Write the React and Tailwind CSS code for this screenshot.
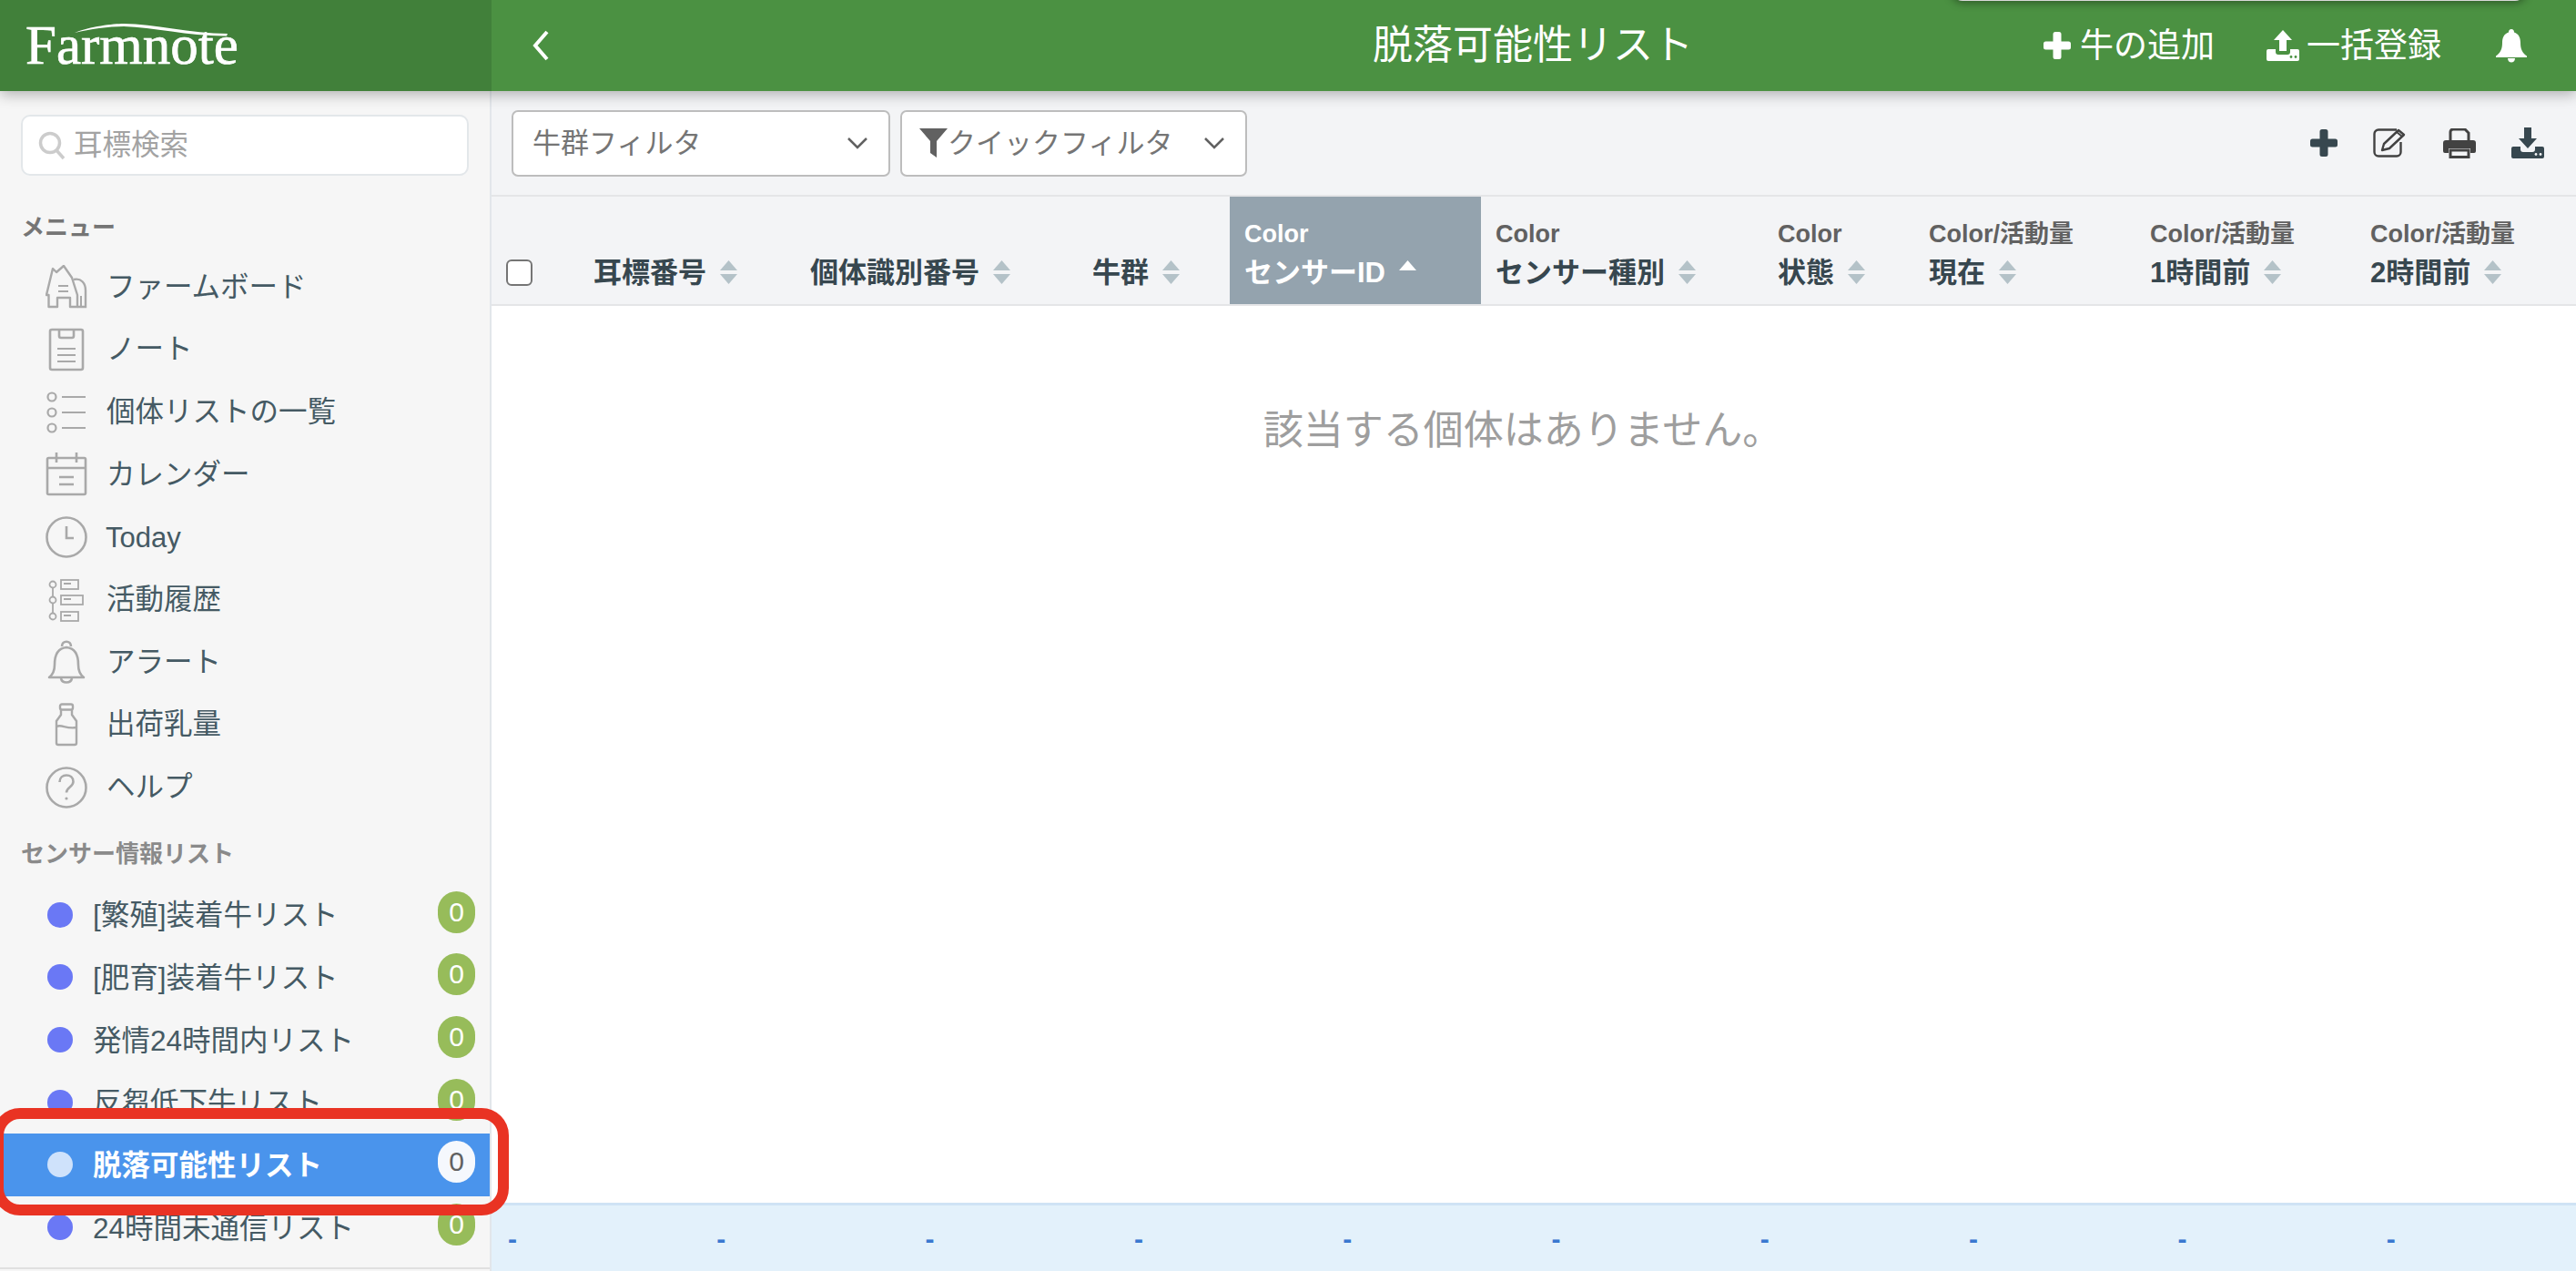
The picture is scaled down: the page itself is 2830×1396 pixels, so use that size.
import React from 'react';

const iconGray = '#a9a9a9';

const FarmIcon = () => (
  <svg width="46" height="48" viewBox="0 0 46 48" fill="none" stroke={iconGray} strokeWidth="2.4">
    <path d="M8 4L1 33h2.500v13H13V36h14v10h8V33L29 14 20 1l-8 7z" strokeLinejoin="round" />
    <path d="M14 23h11M14 29h11" strokeWidth="2" />
    <path d="M31 16c8-2 13 4 13 12v18h-9" />
    <path d="M39 34v12" strokeWidth="2" />
  </svg>
);

const NoteIcon = () => (
  <svg width="40" height="48" viewBox="0 0 40 48" fill="none" stroke={iconGray} strokeWidth="2.6">
    <rect x="2" y="2" width="36" height="44" rx="2" />
    <path d="M12 2v7a2 2 0 0 0 2 2h12a2 2 0 0 0 2-2V2" />
    <path d="M10 23h20M10 30h20M10 37h20" strokeWidth="2.2" />
  </svg>
);

const ListIcon = () => (
  <svg width="44" height="46" viewBox="0 0 44 46" fill="none" stroke={iconGray} strokeWidth="2.2">
    <circle cx="6" cy="6" r="4.5" />
    <circle cx="6" cy="23" r="4.5" />
    <circle cx="6" cy="40" r="4.5" />
    <path d="M17 6h26M17 23h26M17 40h26" />
  </svg>
);

const CalendarIcon = () => (
  <svg width="46" height="48" viewBox="0 0 46 48" fill="none" stroke={iconGray} strokeWidth="2.6">
    <rect x="2" y="6" width="42" height="40" rx="1.5" />
    <path d="M2 17h42M12 0v11M34 0v11" />
    <path d="M15 27h16M15 35h16" strokeWidth="2.4" />
  </svg>
);

const ClockIcon = () => (
  <svg width="46" height="46" viewBox="0 0 46 46" fill="none" stroke={iconGray} strokeWidth="2.6">
    <circle cx="23" cy="23" r="21.5" />
    <path d="M23 11v13h8" />
  </svg>
);

const HistoryIcon = () => (
  <svg width="40" height="48" viewBox="0 0 40 48" fill="none" stroke={iconGray} strokeWidth="1.8">
    <circle cx="5" cy="7" r="3.5" />
    <circle cx="5" cy="24" r="3.5" />
    <circle cx="5" cy="42" r="3.5" />
    <path d="M5 10.5v10M5 27.5v11" />
    <rect x="14" y="2" width="19" height="10" />
    <rect x="14" y="19" width="24" height="10" />
    <rect x="14" y="37" width="19" height="10" />
    <path d="M17 6h8M17 23h8M17 41h8" />
  </svg>
);

const BellOutline = () => (
  <svg width="42" height="48" viewBox="0 0 42 48" fill="none" stroke={iconGray} strokeWidth="2.6">
    <path d="M2 41c4-3 6-7 6-14 0-10 3-18 13-19 10 1 13 9 13 19 0 7 2 11 6 14H2z" strokeLinejoin="round" />
    <path d="M16 7c0-7 10-7 10 0M15 42c1 6 11 6 12 0" />
  </svg>
);

const BottleIcon = () => (
  <svg width="26" height="48" viewBox="0 0 26 48" fill="none" stroke={iconGray} strokeWidth="2.4">
    <rect x="6" y="1.5" width="14" height="6" rx="2" />
    <path d="M7 8v5l-5 7v24a2 2 0 0 0 2 2h18a2 2 0 0 0 2-2V20l-5-7V8" />
    <path d="M2 26c6-3 10 3 22 1" />
  </svg>
);

const HelpIcon = () => (
  <svg width="46" height="46" viewBox="0 0 46 46" fill="none" stroke={iconGray} strokeWidth="2.6">
    <circle cx="23" cy="23" r="21.5" />
    <path d="M15.5 17c0-5 3.500-7.500 7.500-7.500s7.500 2.500 7.500 7c0 6-7.500 6-7.500 12" />
    <circle cx="23" cy="35" r="1.6" fill={iconGray} stroke="none" />
  </svg>
);

const SortIcon = ({ active }) => (
  <svg width="19" height="26" viewBox="0 0 19 26" className="shrink-0">
    <path d="M9.500 0L19 11H0z" fill={active ? '#ffffff' : '#b4c2c8'} />
    {!active && <path d="M0 15h19L9.500 26z" fill="#b4c2c8" />}
  </svg>
);

const PlusIcon = ({ color }) => (
  <svg width="30" height="30" viewBox="0 0 30 30">
    <path d="M10.500 2.500a2.500 2.500 0 0 1 2.500-2.500h4a2.500 2.500 0 0 1 2.500 2.500v8h8a2.500 2.500 0 0 1 2.500 2.500v4a2.500 2.500 0 0 1-2.500 2.500h-8v8a2.500 2.500 0 0 1-2.500 2.500h-4a2.500 2.500 0 0 1-2.500-2.500v-8h-8A2.500 2.500 0 0 1 0 17v-4a2.500 2.500 0 0 1 2.500-2.500h8z" fill={color} />
  </svg>
);

const TrayArrow = ({ color, down, hole }) => (
  <svg width="36" height="34" viewBox="0 0 36 34">
    <path d={down ? 'M14 0h8v12h6L18 23 8 12h6z' : 'M18 0l10 11h-6v12h-8V11H8z'} fill={color} />
    <path d="M2 21h8v3a3 3 0 0 0 3 3h10a3 3 0 0 0 3-3v-3h8a2 2 0 0 1 2 2v9a2 2 0 0 1-2 2H2a2 2 0 0 1-2-2v-9a2 2 0 0 1 2-2z" fill={color} />
    <circle cx="27" cy="29.500" r="1.400" fill={hole} />
    <circle cx="32" cy="29.500" r="1.400" fill={hole} />
  </svg>
);

const EditIcon = () => (
  <svg width="38" height="32" viewBox="0 0 38 32" fill="none" stroke="#424242">
    <path d="M26 1.500H6a4.500 4.500 0 0 0-4.500 4.500v20A4.500 4.500 0 0 0 6 30.500h20a4.500 4.500 0 0 0 4.500-4.500V15" strokeWidth="2.400" />
    <path d="M10 24l2-7L28 2l6 5-16 15z" strokeWidth="2.400" strokeLinejoin="round" />
    <path d="M26 4l6 5" strokeWidth="2" />
  </svg>
);

const PrintIcon = () => (
  <svg width="36" height="33" viewBox="0 0 36 33">
    <path d="M8 14V4a3 3 0 0 1 3-3h13l4 4v9" fill="none" stroke="#424242" strokeWidth="3" />
    <path d="M3 13h30a3 3 0 0 1 3 3v9a2 2 0 0 1-2 2h-4v-5H6v5H2a2 2 0 0 1-2-2v-9a3 3 0 0 1 3-3z" fill="#424242" />
    <rect x="8" y="24" width="20" height="7.500" fill="none" stroke="#424242" strokeWidth="3" />
  </svg>
);

const menuItems = [
  { label: 'ファームボード', icon: <FarmIcon /> },
  { label: 'ノート', icon: <NoteIcon /> },
  { label: '個体リストの一覧', icon: <ListIcon /> },
  { label: 'カレンダー', icon: <CalendarIcon /> },
  { label: 'Today', icon: <ClockIcon />, latin: true },
  { label: '活動履歴', icon: <HistoryIcon /> },
  { label: 'アラート', icon: <BellOutline /> },
  { label: '出荷乳量', icon: <BottleIcon /> },
  { label: 'ヘルプ', icon: <HelpIcon /> },
];

const sensorLists = [
  { label: '[繁殖]装着牛リスト' },
  { label: '[肥育]装着牛リスト' },
  { label: '発情24時間内リスト' },
  { label: '反芻低下牛リスト' },
  { label: '脱落可能性リスト', active: true },
  { label: '24時間未通信リスト' },
];

const columns = [
  { width: 'w-[238px]', name: '耳標番号' },
  { width: 'w-[310px]', name: '個体識別番号' },
  { width: 'w-[167px]', name: '牛群' },
  { width: 'w-[276px]', top: 'Color', name: 'センサーID', active: true },
  { width: 'w-[310px]', top: 'Color', name: 'センサー種別' },
  { width: 'w-[166px]', top: 'Color', name: '状態' },
  { width: 'w-[243px]', top: 'Color/活動量', name: '現在' },
  { width: 'w-[242px]', top: 'Color/活動量', name: '1時間前' },
  { width: 'w-[242px]', top: 'Color/活動量', name: '2時間前' },
];

const Sidebar = () => (
  <aside className="w-[540px] shrink-0 flex flex-col bg-[#f6f6f6] border-r-2 border-[#e2e6ea] overflow-hidden">
    <div className="pt-[26px] pl-[23px] pr-[23px]">
      <div className="h-[67px] flex items-center rounded-[10px] border-2 border-[#e3e7ea] bg-white pl-[17px]">
        <svg width="30" height="32" viewBox="0 0 30 32" fill="none" stroke="#cccccc" strokeWidth="3.500">
          <circle cx="13" cy="13" r="10.500" />
          <path d="M20 21l8 9" />
        </svg>
        <span className="ml-[9px] text-[31.5px] leading-none text-[#a3a3a3]">耳標検索</span>
      </div>
    </div>

    <div className="mt-[42px] mb-[16px] pl-[23px] h-[30px] flex items-center text-[26px] font-bold text-[#757575]">メニュー</div>
    {menuItems.map((item) => (
      <div key={item.label} className="h-[68.7px] shrink-0 flex items-center pl-[50px]">
        <div className="w-[46px] flex justify-center">{item.icon}</div>
        <span className={`leading-none text-[#455a64] ${item.latin ? 'ml-[20px] text-[31px]' : 'ml-[21px] text-[31.5px]'}`}>{item.label}</span>
      </div>
    ))}

    <div className="mt-[24px] mb-[17px] pl-[23px] h-[30px] flex items-center text-[26px] font-bold text-[#8a8a8a]">センサー情報リスト</div>
    {sensorLists.map((item) => (
      <div
        key={item.label}
        className={`h-[68.7px] shrink-0 flex items-center pl-[52px] pr-[16px] ${item.active ? 'bg-[#4a94ec]' : ''}`}
      >
        <span className={`w-[28px] h-[28px] rounded-full shrink-0 ${item.active ? 'bg-[#cfe2fb]' : 'bg-[#6a78f5]'}`} />
        <span className={`ml-[22px] mt-[3px] text-[31.5px] leading-none ${item.active ? 'font-bold text-white' : 'text-[#455a64]'}`}>{item.label}</span>
        <span
          className={`ml-auto mb-[6px] w-[41px] h-[46px] rounded-full flex items-center justify-center text-[30px] leading-none ${
            item.active ? 'bg-[#f5f8fd] text-[#616161]' : 'bg-[#97bc5a] text-white'
          }`}
        >
          0
        </span>
      </div>
    ))}
    <div className="mt-[10px] border-t-2 border-[#e0e0e0]" />
  </aside>
);

const Header = () => (
  <header className="relative z-10 h-[100px] shrink-0 flex text-white shadow-[0_4px_14px_rgba(0,0,0,0.28)]">
    <div className="w-[540px] shrink-0 bg-[#41803a] flex items-center pl-[28px]">
      <div className="relative font-['Liberation_Serif',serif] text-[61px] leading-none text-white pb-[2px] [-webkit-text-stroke:0.7px_white]">
        Farmnote
        <svg className="absolute left-[51px] top-[5px]" width="180" height="20" viewBox="0 0 180 20">
          <path d="M3 12C20 5 45 2 57 2c33 0 73 11 114 11l-1 2.500C130 16 90 6 57 5 40 5 20 8 3 12z" fill="#ffffff" />
        </svg>
      </div>
    </div>
    <div className="relative flex-1 bg-[#4b9142] flex items-center">
      <svg className="ml-[44px]" width="20" height="34" viewBox="0 0 20 34" fill="none" stroke="#ffffff" strokeWidth="4">
        <path d="M17 2L4 17l13 15" />
      </svg>
      <h1 className="absolute left-[968px] text-[44px] leading-none font-normal whitespace-nowrap">脱落可能性リスト</h1>
      <div className="ml-auto flex items-center pr-[54px]">
        <PlusIcon color="#ffffff" />
        <span className="ml-[10px] text-[37px] leading-none">牛の追加</span>
        <span className="ml-[57px]"><TrayArrow color="#ffffff" hole="#4b9142" /></span>
        <span className="ml-[8px] text-[37px] leading-none">一括登録</span>
        <svg className="ml-[60px]" width="34" height="37" viewBox="0 0 34 37">
          <path d="M17 0c2 0 3 1.500 3 3.500 5 1.500 7 6 7 11.500 0 7 2 11 7 14.500V31H0v-1.500C5 26 7 22 7 15 7 9.500 9 5 14 3.500 14 1.500 15 0 17 0z" fill="#ffffff" />
          <path d="M13 32h8c0 6-8 6-8 0z" fill="#ffffff" />
        </svg>
      </div>
      {/* popover peeking from above the window */}
      <div className="absolute left-[1604px] top-[-20px] w-[631px] h-[21px] rounded-b-[12px] bg-[#d9d9d9] shadow-[0_2px_10px_rgba(0,0,0,0.4)]" />
    </div>
  </header>
);

const Toolbar = () => (
  <div className="h-[114px] shrink-0 bg-[#f3f4f6] flex items-center pl-[22px] pr-[35px]">
    <div className="w-[416px] h-[73px] rounded-[7px] border-2 border-[#bdbdbd] bg-white flex items-center pl-[21px] pr-[22px]">
      <span className="text-[31px] leading-none text-[#757575]">牛群フィルタ</span>
      <svg className="ml-auto" width="24" height="14" viewBox="0 0 24 14" fill="none" stroke="#616161" strokeWidth="2.500">
        <path d="M2 2l10 10L22 2" />
      </svg>
    </div>
    <div className="ml-[11px] w-[381px] h-[73px] rounded-[7px] border-2 border-[#bdbdbd] bg-white flex items-center pl-[19px] pr-[22px]">
      <svg width="31" height="32" viewBox="0 0 31 32">
        <path d="M0 0h31L19 14v18l-7-5V14z" fill="#616161" />
      </svg>
      <span className="text-[31px] leading-none text-[#757575] whitespace-nowrap">クイックフィルタ</span>
      <svg className="ml-auto" width="24" height="14" viewBox="0 0 24 14" fill="none" stroke="#616161" strokeWidth="2.500">
        <path d="M2 2l10 10L22 2" />
      </svg>
    </div>
    <div className="ml-auto flex items-center gap-[39px]">
      <PlusIcon color="#37474f" />
      <EditIcon />
      <PrintIcon />
      <TrayArrow color="#37474f" hole="#f3f4f6" down />
    </div>
  </div>
);

const TableHead = () => (
  <div className="h-[122px] shrink-0 flex bg-[#f3f4f6] border-t-2 border-b-2 border-[#e4e5e7]">
    <div className="w-[96px] shrink-0 flex items-end pl-[16px] pb-[20px]">
      <div className="w-[29px] h-[29px] rounded-[6px] border-2 border-[#757575] bg-white" />
    </div>
    {columns.map((col) => (
      <div
        key={col.name}
        className={`${col.width} shrink-0 flex flex-col justify-end gap-[2px] pl-[16px] pb-[15px] ${col.active ? 'bg-[#94a3ae] text-white' : 'text-[#37474f]'}`}
      >
        {col.top && (
          <div className={`text-[27px] leading-[40px] font-semibold whitespace-nowrap ${col.active ? 'text-white' : 'text-[#616161]'}`}>{col.top}</div>
        )}
        <div className="h-[40px] flex items-center gap-[15px] text-[31px] leading-none font-bold whitespace-nowrap">
          {col.name}
          <SortIcon active={col.active} />
        </div>
      </div>
    ))}
  </div>
);

const App = () => (
  <div className="relative w-[2830px] h-[1396px] overflow-hidden flex flex-col bg-white font-['Liberation_Sans','Noto_Sans_CJK_JP',sans-serif]">
    <Header />
    <div className="flex-1 min-h-0 flex">
      <Sidebar />
      <main className="flex-1 min-w-0 flex flex-col">
        <Toolbar />
        <TableHead />
        <div className="flex-1 bg-white flex justify-center pt-[114px] pr-[24px]">
          <p className="text-[44px] leading-[46px] text-[#9e9e9e]">該当する個体はありません。</p>
        </div>
        <div className="h-[75px] shrink-0 flex items-center pl-[18px] pt-[2px] bg-[#e3f1fb] border-t-[3px] border-[#cfe3f5]">
          {Array.from({ length: 10 }).map((_, i) => (
            <span key={i} className="w-[229.3px] shrink-0 text-[30px] leading-none font-bold text-[#3a78d0]">-</span>
          ))}
        </div>
      </main>
    </div>

    {/* red annotation around the selected row */}
    <div className="absolute left-[-8px] top-[1217px] w-[567px] h-[118px] rounded-[30px] border-[12px] border-[#e93323] pointer-events-none" />
  </div>
);

export default App;
